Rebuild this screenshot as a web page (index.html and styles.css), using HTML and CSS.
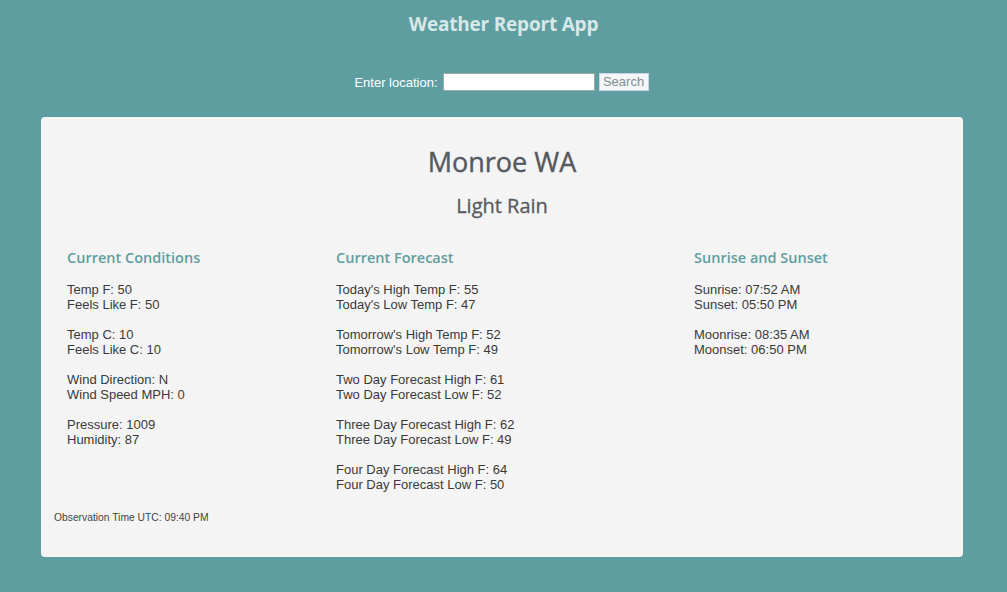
FILE: index.html
```html
<!DOCTYPE html>
<html>
<head>
<meta charset="utf-8">
<link rel="stylesheet" href="styles.css">
</head>
<body>
<header class="top">
  <h1 class="app-title">Weather Report App</h1>
  <form class="search">
    <label class="search-label">Enter location:</label>
    <input class="search-input" type="text">
    <button class="search-btn" type="button">Search</button>
  </form>
</header>
<main class="card">
  <h2 class="place">Monroe WA</h2>
  <h3 class="cond">Light Rain</h3>
  <div class="cols">
    <section class="col">
      <h4 class="col-title">Current Conditions</h4>
      <p class="grp">Temp F: 50<br>Feels Like F: 50</p>
      <p class="grp">Temp C: 10<br>Feels Like C: 10</p>
      <p class="grp">Wind Direction: N<br>Wind Speed MPH: 0</p>
      <p class="grp">Pressure: 1009<br>Humidity: 87</p>
    </section>
    <section class="col">
      <h4 class="col-title">Current Forecast</h4>
      <p class="grp">Today's High Temp F: 55<br>Today's Low Temp F: 47</p>
      <p class="grp">Tomorrow's High Temp F: 52<br>Tomorrow's Low Temp F: 49</p>
      <p class="grp">Two Day Forecast High F: 61<br>Two Day Forecast Low F: 52</p>
      <p class="grp">Three Day Forecast High F: 62<br>Three Day Forecast Low F: 49</p>
      <p class="grp">Four Day Forecast High F: 64<br>Four Day Forecast Low F: 50</p>
    </section>
    <section class="col">
      <h4 class="col-title">Sunrise and Sunset</h4>
      <p class="grp">Sunrise: 07:52 AM<br>Sunset: 05:50 PM</p>
      <p class="grp">Moonrise: 08:35 AM<br>Moonset: 06:50 PM</p>
    </section>
  </div>
  <p class="obs">Observation Time UTC: 09:40 PM</p>
</main>
</body>
</html>
```

FILE: styles.css
```css
html, body {
  margin: 0;
  padding: 0;
}
body {
  background: #5f9ea0;
  font-family: "Liberation Sans", Arial, sans-serif;
  height: 592px;
  overflow: hidden;
}
.top {
  display: flex;
  flex-direction: column;
  align-items: center;
}
.app-title {
  margin: 11px 0 0;
  font-family: "Open Sans", "Noto Sans", sans-serif;
  font-size: 19px;
  font-weight: 700;
  line-height: 26px;
  color: #d7e8e8;
  letter-spacing: -0.2px;
}
.search {
  margin-top: 36px;
  display: flex;
  align-items: center;
  gap: 4px;
  margin-right: 4px;
}
.search-label {
  color: #ffffff;
  font-size: 13px;
  margin-right: 1px;
}
.search-input {
  width: 148px;
  height: 14px;
  padding: 1px;
  border: 1px solid #9aaaaa;
  background: #fff;
  margin: 0;
}
.search-btn {
  height: 18px;
  width: 50px;
  padding: 0;
  margin: 0;
  font-family: "Liberation Sans", Arial, sans-serif;
  font-size: 13px;
  color: #7d9090;
  background: #f4f6f8;
  border: 1px solid #c8d3e6;
  line-height: 16px;
}
.card {
  margin: 26px 44px 0 41px;
  height: 440px;
  box-sizing: border-box;
  background: #f4f4f4;
  border-radius: 4px;
  padding: 29px 13px 0;
  color: #333;
}
.place {
  margin: 0;
  text-align: center;
  font-family: "Open Sans", "Noto Sans", sans-serif;
  font-size: 27px;
  font-weight: 400;
  line-height: 32px;
  color: #555a60;
  -webkit-text-stroke: 0.4px #555a60;
}
.cond {
  margin: 16px 0 0;
  text-align: center;
  font-family: "Open Sans", "Noto Sans", sans-serif;
  font-size: 20px;
  font-weight: 400;
  line-height: 24px;
  color: #555a60;
  -webkit-text-stroke: 0.3px #555a60;
}
.cols {
  display: grid;
  grid-template-columns: 269px 358px 1fr;
  padding-left: 13px;
  margin-top: 30px;
}
.col-title {
  margin: 0 0 14px;
  font-family: "Open Sans", "Noto Sans", sans-serif;
  font-size: 14.5px;
  font-weight: 600;
  line-height: 20px;
  color: #5f9ea0;
}
.grp {
  margin: 0 0 15px;
  font-size: 13px;
  line-height: 15px;
  color: #3a3a3a;
}
.obs {
  margin: 5px 0 0;
  font-size: 10.3px;
  line-height: 12px;
  color: #444;
}
```
